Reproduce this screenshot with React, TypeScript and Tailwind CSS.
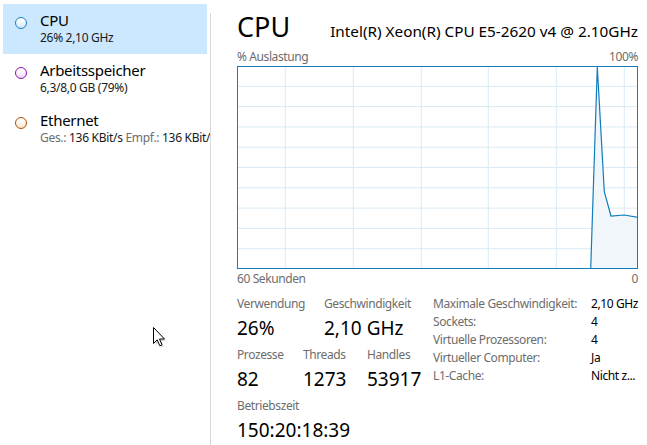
import React from "react";

const font = { fontFamily: '"Noto Sans", "Open Sans", sans-serif' };

function Circle({ border, fill }: { border: string; fill: string }) {
  return (
    <div
      className="w-[12px] h-[12px] rounded-full border"
      style={{ borderColor: border, background: `linear-gradient(to bottom, #ffffff 20%, ${fill})` }}
    />
  );
}

function SideItem({
  selected,
  border,
  fill,
  title,
  children,
}: {
  selected?: boolean;
  border: string;
  fill: string;
  title: string;
  children: React.ReactNode;
}) {
  return (
    <div className={`h-[50px] w-[204px] flex ${selected ? "bg-[#cce8ff]" : ""}`}>
      <div className="w-[37px] pl-[12px] pt-[13px] shrink-0">
        <Circle border={border} fill={fill} />
      </div>
      <div className="pt-[7px] whitespace-nowrap">
        <div className="text-[15px] leading-[19px] tracking-[-0.3px] text-black">{title}</div>
        <div className="text-[12px] leading-[16px] tracking-[-0.3px] text-[#1a1a1a]">{children}</div>
      </div>
    </div>
  );
}

function Chart() {
  const W = 401;
  const H = 203;
  const vx = [48.3, 116.3, 184.3, 251.3, 319.3, 387.3];
  const hy = [1, 2, 3, 4, 5, 6, 7, 8, 9].map((k) => (k * H) / 10);
  const pts: [number, number][] = [
    [353.7, H],
    [360.3, 1],
    [367.3, 125.7],
    [374, 150],
    [387.3, 149],
    [W, 151.3],
  ];
  const line = pts.map((p) => p.join(",")).join(" ");
  const area = line + ` ${W},${H}`;
  return (
    <svg width={W} height={H} viewBox={`0 0 ${W} ${H}`} className="block">
      <rect x={0} y={0} width={W} height={H} fill="#ffffff" />
      {vx.map((x) => (
        <line key={"v" + x} x1={x} y1={0} x2={x} y2={H} stroke="#d9eaf4" strokeWidth={1} />
      ))}
      {hy.map((y) => (
        <line key={"h" + y} x1={0} y1={y} x2={W} y2={y} stroke="#d9eaf4" strokeWidth={1} />
      ))}
      <polygon points={area} fill="#f1f6fa" />
      <polyline points={line} fill="none" stroke="#117dbb" strokeWidth={1.2} />
      <rect x={0.5} y={0.5} width={W - 1} height={H - 1} fill="none" stroke="#117dbb" strokeWidth={1} />
    </svg>
  );
}

function Stat({ label, value, w }: { label: string; value: string; w: string }) {
  return (
    <div className={w}>
      <div className="text-[12px] leading-[16px] tracking-[-0.4px] text-[#6d6d6d] whitespace-nowrap">{label}</div>
      <div className="mt-[4px] text-[19px] leading-[24px] text-black whitespace-nowrap">{value}</div>
    </div>
  );
}

export default function App() {
  const rows: [string, string][] = [
    ["Maximale Geschwindigkeit:", "2,10 GHz"],
    ["Sockets:", "4"],
    ["Virtuelle Prozessoren:", "4"],
    ["Virtueller Computer:", "Ja"],
    ["L1-Cache:", "Nicht z..."],
  ];
  return (
    <div className="relative w-[647px] h-[445px] bg-white overflow-hidden flex" style={font}>
      {/* Sidebar */}
      <div className="w-[210px] shrink-0 overflow-hidden pt-[4px] pl-[3px]">
        <SideItem selected border="#1b80c4" fill="#cfe6f7" title="CPU">
          26% 2,10 GHz
        </SideItem>
        <SideItem border="#8b12ae" fill="#efd6f6" title="Arbeitsspeicher">
          6,3/8,0 GB (79%)
        </SideItem>
        <SideItem border="#a74f01" fill="#fbe3cc" title="Ethernet">
          <span className="text-[#6d6d6d]">Ges.:</span> 136 KBit/s{" "}
          <span className="text-[#6d6d6d]">Empf.:</span> 136 KBit/s
        </SideItem>
      </div>
      {/* Separator */}
      <div className="w-px shrink-0 mt-[13px] bg-[#d9d9d9]" />
      {/* Main */}
      <div className="pl-[26px] flex-1">
        <div className="w-[401px] flex items-baseline justify-between pt-[11px] h-[49px]">
          <div className="text-[27px] leading-[32px] text-black">CPU</div>
          <div className="text-[15.3px] leading-[20px] text-black whitespace-nowrap">
            Intel(R) Xeon(R) CPU E5-2620 v4 @ 2.10GHz
          </div>
        </div>
        <div className="w-[401px] flex justify-between text-[12px] leading-[16px] tracking-[-0.4px] text-[#6d6d6d]">
          <span>% Auslastung</span>
          <span>100%</span>
        </div>
        <div className="mt-[1px]">
          <Chart />
        </div>
        <div className="mt-[2px] w-[401px] flex justify-between text-[12px] leading-[16px] tracking-[-0.4px] text-[#6d6d6d]">
          <span>60 Sekunden</span>
          <span>0</span>
        </div>
        <div className="flex mt-[9px]">
          <div className="w-[196px] shrink-0">
            <div className="flex">
              <Stat label="Verwendung" value="26%" w="w-[87px]" />
              <Stat label="Geschwindigkeit" value="2,10 GHz" w="w-[109px]" />
            </div>
            <div className="flex mt-[7px]">
              <Stat label="Prozesse" value="82" w="w-[66px]" />
              <Stat label="Threads" value="1273" w="w-[64px]" />
              <Stat label="Handles" value="53917" w="w-[66px]" />
            </div>
            <div className="flex mt-[7px]">
              <Stat label="Betriebszeit" value="150:20:18:39" w="w-[196px]" />
            </div>
          </div>
          <div className="self-start -mt-[1px] grid grid-cols-[158px_auto] content-start text-[12px] leading-[18px] tracking-[-0.4px] whitespace-nowrap">
            {rows.map(([k, v]) => (
              <React.Fragment key={k}>
                <div className="text-[#6d6d6d]">{k}</div>
                <div className="text-black">{v}</div>
              </React.Fragment>
            ))}
          </div>
        </div>
      </div>
      {/* Mouse cursor */}
      <svg
        className="absolute left-[153px] top-[327px]"
        width="14"
        height="22"
        viewBox="0 0 14 22"
      >
        <path d="M1.5,1.5 L1.5,17.5 L5.2,13.8 L7.8,19.8 L10,18.8 L7.5,13 L12.5,13 Z" fill="#000" opacity="0.15" transform="translate(1,1)" />
        <path d="M0.5,0.5 L0.5,16.5 L4.2,12.8 L6.8,18.8 L9,17.8 L6.5,12 L11.5,12 Z" fill="#fff" stroke="#000" strokeWidth="1" strokeLinejoin="miter" />
      </svg>
    </div>
  );
}
